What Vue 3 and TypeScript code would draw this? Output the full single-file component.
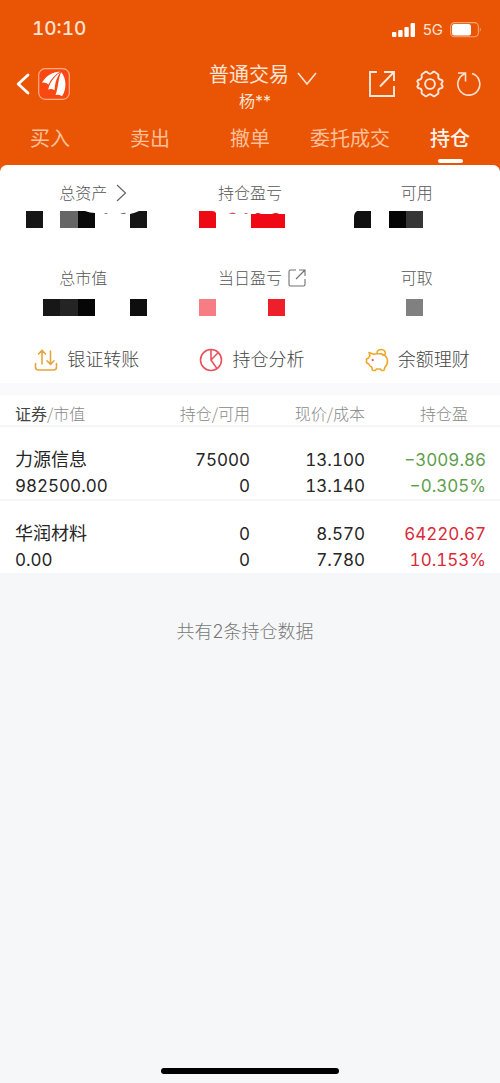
<script setup lang="ts">
import { ref } from 'vue'

interface Block {
  d: string
  fill: string
}
interface Metric {
  label: string
  mark?: 'chevron' | 'open'
  blocks: Block[]
}
interface Holding {
  name: string
  value: string
  held: string
  usable: string
  price: string
  cost: string
  profit: string
  rate: string
  down: boolean
}

const tabs = ['买入', '卖出', '撤单', '委托成交', '持仓']
const active = ref('持仓')

const metrics: Metric[] = [
  {
    label: '总资产',
    mark: 'chevron',
    blocks: [
      { d: 'M26 1h17v17H26z', fill: '#161616' },
      { d: 'M60 1h18v17H60z', fill: '#666' },
      { d: 'M78 1h7q5 2 10 2v15H78z', fill: '#0a0a0a' },
      { d: 'M104 4q2-2 4 0zM120 4q4-2 6-1l-1 1z', fill: '#777' },
      { d: 'M130 4q5-1 9-3h8v17h-17z', fill: '#161616' },
    ],
  },
  {
    label: '持仓盈亏',
    blocks: [
      { d: 'M32 1h13q3 0 4 2v15H32z', fill: '#ee0a14' },
      { d: 'M62 4q4-3 7 0zM77 4q2-2 4 0z', fill: '#d8505a' },
      { d: 'M84 4h4q3-2 6 0h11q4-2 7 0h6v14H84z', fill: '#f00914' },
    ],
  },
  {
    label: '可用',
    blocks: [
      { d: 'M23 1h14v17H20V7q0-4 3-6z', fill: '#101010' },
      { d: 'M55 1h17v17H55z', fill: '#050505' },
      { d: 'M72 1h17v17H72z', fill: '#363636' },
    ],
  },
  {
    label: '总市值',
    blocks: [
      { d: 'M43 4h17v17H43z', fill: '#171717' },
      { d: 'M60 4h18v17H60z', fill: '#242424' },
      { d: 'M78 4h17v17H78z', fill: '#060606' },
      { d: 'M130 4h17v17h-17z', fill: '#0e0e0e' },
    ],
  },
  {
    label: '当日盈亏',
    mark: 'open',
    blocks: [
      { d: 'M32 4h17v17H32z', fill: '#f77d84' },
      { d: 'M101 4h17v17h-17z', fill: '#ee1f2b' },
    ],
  },
  {
    label: '可取',
    blocks: [{ d: 'M72 4h17v17H72z', fill: '#808080' }],
  },
]

const holdings: Holding[] = [
  { name: '力源信息', value: '982500.00', held: '75000', usable: '0', price: '13.100', cost: '13.140', profit: '−3009.86', rate: '−0.305%', down: true },
  { name: '华润材料', value: '0.00', held: '0', usable: '0', price: '8.570', cost: '7.780', profit: '64220.67', rate: '10.153%', down: false },
]
</script>

<template>
  <div class="page">
    <header class="top">
      <div class="status">
        <span class="time">10:10</span>
        <div class="signals">
          <svg width="24" height="15" viewBox="0 0 24 15" fill="#fff" aria-hidden="true">
            <rect x="0" y="9" width="4.4" height="5" rx="1" />
            <rect x="6.2" y="7" width="4.4" height="7" rx="1" />
            <rect x="12.4" y="4" width="4.4" height="10" rx="1" />
            <rect x="18.6" y="0" width="4.4" height="14" rx="1" />
          </svg>
          <span class="net">5G</span>
          <svg width="32" height="16" viewBox="0 0 32 16" aria-hidden="true">
            <rect x="0.6" y="0.6" width="27.8" height="14.2" rx="4" fill="none" stroke="#f6a67c" stroke-width="1.1" />
            <rect x="2" y="2" width="19" height="11.5" rx="2.5" fill="#fff" />
            <path d="M29.8 5.5q2 2.2 0 4.4z" fill="#f6a67c" />
          </svg>
        </div>
      </div>

      <div class="bar">
        <div class="side">
          <button class="plain" type="button" aria-label="返回">
            <svg width="14" height="22" viewBox="0 0 14 22" fill="none" stroke="#fff" stroke-width="2.8" stroke-linecap="round" stroke-linejoin="round">
              <path d="M12 2 2.2 11 12 20" />
            </svg>
          </button>
          <svg width="32" height="32" viewBox="0 0 32 32" aria-hidden="true">
            <rect x="0.7" y="0.7" width="30.6" height="30.6" rx="6.5" fill="#fa4812" stroke="#ffae84" stroke-width="1.2" />
            <g fill="#fff">
              <path d="M22 3.600C14 4.300 8 7.500 4 14.800Q7.500 14 10.500 16.600C13 11 17 7 22 3.600z" />
              <path d="M22.500 4.200C17 8 12.300 13 10.200 21.500Q13.800 20.300 16.600 22.300C17 14 19 9 22.500 4.200z" />
              <path d="M23.300 4.200C20 10 20.500 20 17.500 27Q21 26.300 24 28.200C29 21 28.500 10 23.300 4.200z" />
            </g>
          </svg>
        </div>
        <button class="plain account" type="button">
          <span class="title">普通交易
            <svg class="hang-wide" width="20" height="14" viewBox="0 0 20 14" fill="none" stroke="#ffe3d3" stroke-width="1.6">
              <path d="M1 1 10 12 19 1" />
            </svg>
          </span>
          <span class="owner">杨**</span>
        </button>
        <div class="side tools">
          <button class="plain" type="button" aria-label="分享">
            <svg width="28" height="28" viewBox="0 0 28 28" fill="none" stroke="#ffe9dc" stroke-width="1.9">
              <path d="M9 2H2v24h24V16M12 16.500 25.500 2.500M16 2h10v9" />
            </svg>
          </button>
          <button class="plain gear" type="button" aria-label="设置">
            <svg width="28" height="28" viewBox="0 0 28 28" fill="none" stroke="#ffe9dc" stroke-width="1.9" stroke-linejoin="round">
              <path d="M9.500 1.800Q11 1.500 11.600 2.600Q14 5 16.400 2.600Q17 1.500 18.500 1.800L22 4.200Q22.700 5 22.300 6.200Q21.800 9.200 25 9.700Q26.400 10 26.700 11.500Q26 12.500 25.300 14Q26 15.500 26.700 16.500Q26.400 18 25 18.300Q21.800 18.800 22.300 21.800Q22.700 23 22 23.800L18.500 26.200Q17 26.500 16.400 25.400Q14 23 11.600 25.400Q11 26.500 9.500 26.200L6 23.800Q5.300 23 5.700 21.800Q6.200 18.800 3 18.300Q1.600 18 1.300 16.500Q2 15.500 2.700 14Q2 12.500 1.300 11.500Q1.600 10 3 9.700Q6.200 9.200 5.700 6.200Q5.300 5 6 4.200Z" />
              <circle cx="14" cy="14" r="4.900" />
            </svg>
          </button>
          <button class="plain" type="button" aria-label="刷新">
            <svg width="26" height="26" viewBox="0 0 26 26" fill="none" stroke="#ffe0cf" stroke-width="1.6">
              <path d="M16 2.600A11 11 0 1 1 8.500 3M2 2h7.500v8.500" />
            </svg>
          </button>
        </div>
      </div>

      <nav class="tabs">
        <button v-for="t in tabs" :key="t" type="button" class="plain tab" :class="{ on: t === active }" @click="active = t">{{ t }}</button>
      </nav>
    </header>

    <main>
      <section class="card">
        <div class="metrics">
          <div v-for="m in metrics" :key="m.label" class="metric">
            <span class="label">{{ m.label }}
              <svg v-if="m.mark === 'chevron'" class="chevron" width="20" height="20" viewBox="0 0 20 20" fill="none" stroke="#666" stroke-width="1.2">
                <path d="M2 2 10.500 10 2 18" />
              </svg>
              <svg v-if="m.mark === 'open'" class="hang" width="20" height="20" viewBox="0 0 20 20" fill="none" stroke="#707070" stroke-width="1.1">
                <path d="M9 2H3.500Q2 2 2 3.500V16.500Q2 18 3.500 18H16.500Q18 18 18 16.500V11M9 11 17.500 2.500M12 2h6v6" />
              </svg>
            </span>
            <svg width="166" height="24" viewBox="0 0 166 24" role="img" :aria-label="m.label">
              <path v-for="(b, i) in m.blocks" :key="i" :d="b.d" :fill="b.fill" />
            </svg>
          </div>
        </div>

        <div class="actions">
          <button class="plain action" type="button">
            <svg width="24" height="24" viewBox="0 0 24 24" fill="none" stroke="#e5a53c" stroke-width="1.600" stroke-linecap="round" stroke-linejoin="round">
              <path d="M1.500 15.500v3.500q0 3 3 3h15q3 0 3-3v-3.500M8 16V2.500M4.500 6 8 2.300 11.500 6M16.500 3v13M13 12.800l3.500 3.600 3.500-3.600" />
            </svg>
            银证转账
          </button>
          <button class="plain action" type="button">
            <svg width="24" height="24" viewBox="0 0 24 24" fill="none" stroke="#e8525c" stroke-width="1.600" stroke-linejoin="round">
              <circle cx="12" cy="12" r="10.500" />
              <path d="M12 1.500V12L19.300 4.500M12 12l6 8.600" />
            </svg>
            持仓分析
          </button>
          <button class="plain action" type="button">
            <svg width="24" height="24" viewBox="0 0 24 24" fill="none" stroke="#eda92d" stroke-width="1.600" stroke-linecap="round" stroke-linejoin="round">
              <path d="M4 4.500 8.500 6.300Q10 5.700 12 5.700H16Q22.500 7.500 22.500 13Q22.500 17 19.800 19.300L19.300 21.500Q19 22.500 18 22.500H16.500L15.300 21H11.500L10.300 22.500H8.500Q7.500 22.500 7.300 21.500L6.800 19.300Q4.300 18 3.500 15.800L1.500 14.800V11L3.600 10Q4 8.600 5 7.800Z" />
              <path d="M12 5.500Q12 1.500 16 1.500Q20.500 1.700 20.300 5.500Q20 7.500 18.500 7.300Q17 6.500 16 5.700" />
              <circle cx="7.500" cy="12" r="0.700" fill="#e8525c" stroke="#e8525c" stroke-width="0.800" />
            </svg>
            余额理财
          </button>
        </div>
      </section>

      <table class="holdings">
        <thead>
          <tr>
            <th scope="col"><b>证券</b>/市值</th>
            <th scope="col">持仓/可用</th>
            <th scope="col">现价/成本</th>
            <th scope="col">持仓盈</th>
          </tr>
        </thead>
        <tbody>
          <tr v-for="h in holdings" :key="h.name">
            <td><div class="name">{{ h.name }}</div><div>{{ h.value }}</div></td>
            <td><div>{{ h.held }}</div><div>{{ h.usable }}</div></td>
            <td><div>{{ h.price }}</div><div>{{ h.cost }}</div></td>
            <td :class="h.down ? 'down' : 'up'"><div>{{ h.profit }}</div><div>{{ h.rate }}</div></td>
          </tr>
        </tbody>
      </table>

      <p class="count">共有{{ holdings.length }}条持仓数据</p>
    </main>

    <div class="home"></div>
  </div>
</template>

<style>
body {
  margin: 0;
  background: #f6f7f9;
}
</style>

<style scoped>
.page {
  display: flex;
  flex-direction: column;
  min-height: 100vh;
  box-sizing: border-box;
  padding-bottom: 9px;
  background: #f6f7f9;
  color: #262626;
  font-family: Inter, "Noto Sans CJK SC", sans-serif;
}
svg {
  display: block;
  flex: none;
}
.plain {
  margin: 0;
  padding: 0;
  border: 0;
  background: none;
  color: inherit;
  font: inherit;
  cursor: pointer;
}
.top {
  background: #e95504;
  color: #ffe3d3;
  padding-bottom: 8px;
}
.status {
  display: flex;
  align-items: center;
  justify-content: space-between;
  height: 56px;
  padding: 0 18px 0 32px;
}
.time {
  font-size: 19px;
  font-weight: 500;
  font-variant-numeric: tabular-nums;
}
.signals {
  display: flex;
  align-items: center;
  gap: 7px;
  padding-top: 4px;
}
.net {
  font-size: 15px;
  line-height: 16px;
}
.bar {
  display: flex;
  align-items: center;
  height: 56px;
  padding: 0 18px 0 16px;
}
.side {
  display: flex;
  flex: 1 1 0;
  align-items: center;
  gap: 8px;
}
.tools {
  justify-content: flex-end;
  gap: 12px;
}
.gear {
  margin-left: 8px;
}
.account {
  display: flex;
  flex-direction: column;
  align-items: center;
  padding-top: 6px;
}
.title {
  display: flex;
  align-items: center;
  font-size: 20px;
  line-height: 28px;
}
.hang-wide {
  margin: 8px -28px 0 8px;
}
.owner {
  padding-left: 12px;
  font-size: 16px;
  line-height: 24px;
}
.tabs {
  display: grid;
  grid-template-columns: repeat(5, 1fr);
  padding-top: 13px;
}
.tab {
  display: flex;
  flex-direction: column;
  align-items: center;
  height: 38px;
  color: #ffc09b;
  font-size: 20px;
  line-height: 28px;
}
.tab.on {
  color: #fff3eb;
  font-weight: 500;
}
.tab.on::after {
  content: "";
  width: 25px;
  height: 4px;
  margin-top: 6px;
  border-radius: 2px;
  background: #fff;
}
.card {
  margin-top: -6px;
  padding: 16px 0 11px;
  border-radius: 7px 7px 0 0;
  background: #fff;
}
.metrics {
  display: grid;
  grid-template-columns: repeat(3, 1fr);
  row-gap: 32px;
}
.metric {
  display: flex;
  flex-direction: column;
  align-items: center;
  gap: 5px;
}
.label {
  display: flex;
  align-items: center;
  color: #555;
  font-size: 16px;
  font-weight: 300;
  line-height: 24px;
}
.hang {
  margin: 0 -25px 0 5px;
}
.chevron {
  margin: 0 -28px 0 8px;
}
.actions {
  display: grid;
  grid-template-columns: repeat(3, 1fr);
  margin-top: 29px;
  padding-left: 4px;
}
.action {
  display: flex;
  align-items: center;
  justify-content: center;
  gap: 9px;
  color: #444;
  font-size: 18px;
  font-weight: 300;
  line-height: 24px;
}
.holdings {
  width: 100%;
  table-layout: fixed;
  border-collapse: separate;
  border-spacing: 0;
  border-top: 12px solid #fafafd;
  background: #fff;
}
.holdings th,
.holdings td {
  padding: 0;
  text-align: right;
}
.holdings th {
  height: 32px;
  padding-top: 6px;
  box-sizing: border-box;
  border-bottom: 2px solid #f6f6f8;
  color: #888;
  font-family: "Noto Sans CJK SC", sans-serif;
  font-size: 16px;
  font-weight: 300;
  line-height: 24px;
}
.holdings th b {
  color: #444;
  font-weight: 400;
}
.holdings th:first-child,
.holdings td:first-child {
  width: 30%;
  padding-left: 15px;
  text-align: left;
}
.holdings th:nth-child(2) {
  width: 20%;
}
.holdings th:nth-child(3) {
  width: 23%;
}
.holdings th:last-child {
  padding-right: 32px;
}
.holdings td {
  padding-top: 20px;
  font-size: 17px;
  font-variant-numeric: tabular-nums;
  line-height: 26px;
}
.holdings .name {
  font-size: 18px;
}
.holdings td:last-child {
  padding-right: 14px;
}
.holdings tbody tr:not(:last-child) td {
  border-bottom: 2px solid #f6f6f8;
}
.down {
  color: #5fa04e;
}
.up {
  color: #d92b3a;
}
.count {
  margin: 45px 0 0;
  padding-right: 10px;
  color: #777;
  font-size: 18px;
  font-weight: 300;
  line-height: 28px;
  text-align: center;
}
.home {
  width: 178px;
  height: 6px;
  margin: auto auto 0;
  border-radius: 3px;
  background: #000;
}
</style>
